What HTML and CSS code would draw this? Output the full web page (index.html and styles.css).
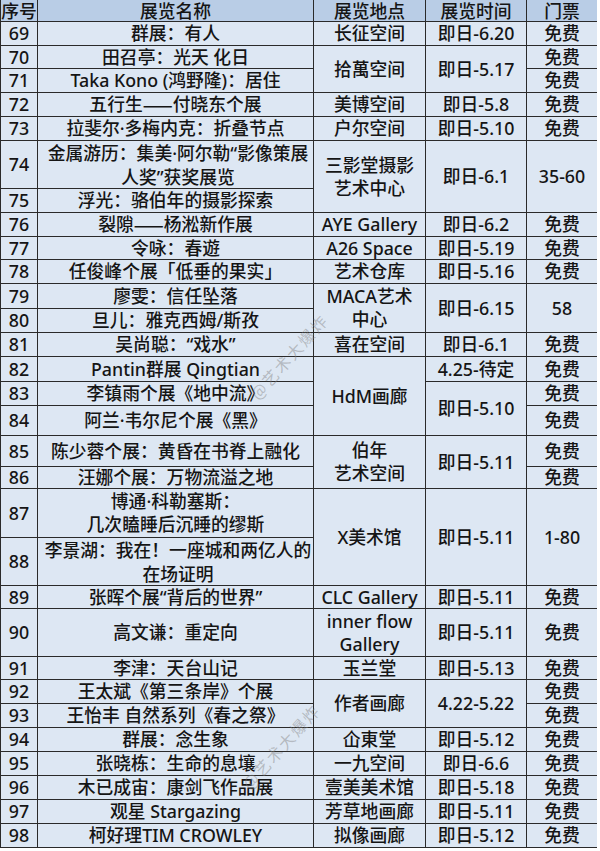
FILE: index.html
```html
<!DOCTYPE html>
<html lang="zh-CN">
<head>
<meta charset="utf-8">
<title>展览列表</title>
<link rel="stylesheet" href="styles.css">
</head>
<body>
<div class="sheet">
  <div class="c hd">序号</div><div class="c hd">展览名称</div><div class="c hd">展览地点</div><div class="c hd">展览时间</div><div class="c hd">门票</div>

  <div class="c">69</div><div class="c">群展：有人</div><div class="c">长征空间</div><div class="c">即日-6.20</div><div class="c">免费</div>

  <div class="c">70</div><div class="c">田召亭：光天 化日</div><div class="c s2">拾萬空间</div><div class="c s2">即日-5.17</div><div class="c">免费</div>
  <div class="c">71</div><div class="c">Taka Kono (鸿野隆)：居住</div><div class="c">免费</div>

  <div class="c">72</div><div class="c">五行生<span class="cjk">——</span>付晓东个展</div><div class="c">美博空间</div><div class="c">即日-5.8</div><div class="c">免费</div>
  <div class="c">73</div><div class="c">拉斐尔·多梅内克：折叠节点</div><div class="c">户尔空间</div><div class="c">即日-5.10</div><div class="c">免费</div>

  <div class="c">74</div><div class="c ovf"><div>金属游历：集美·阿尔勒“影像策展<br>人奖”获奖展览</div></div><div class="c s2">三影堂摄影<br>艺术中心</div><div class="c s2">即日-6.1</div><div class="c s2">35-60</div>
  <div class="c">75</div><div class="c">浮光：骆伯年的摄影探索</div>

  <div class="c">76</div><div class="c">裂隙<span class="cjk">——</span>杨淞新作展</div><div class="c">AYE Gallery</div><div class="c">即日-6.2</div><div class="c">免费</div>
  <div class="c">77</div><div class="c">令咏：春遊</div><div class="c">A26 Space</div><div class="c">即日-5.19</div><div class="c">免费</div>
  <div class="c">78</div><div class="c">任俊峰个展「低垂的果实」</div><div class="c">艺术仓库</div><div class="c">即日-5.16</div><div class="c">免费</div>

  <div class="c">79</div><div class="c">廖雯：信任坠落</div><div class="c s2">MACA艺术<br>中心</div><div class="c s2">即日-6.15</div><div class="c s2">58</div>
  <div class="c">80</div><div class="c">旦儿：雅克西姆/斯孜</div>

  <div class="c">81</div><div class="c">吴尚聪：“戏水”</div><div class="c">喜在空间</div><div class="c">即日-6.1</div><div class="c">免费</div>

  <div class="c">82</div><div class="c">Pantin群展 Qingtian</div><div class="c s3">HdM画廊</div><div class="c">4.25-待定</div><div class="c">免费</div>
  <div class="c">83</div><div class="c">李镇雨个展《地中流》</div><div class="c s2">即日-5.10</div><div class="c">免费</div>
  <div class="c">84</div><div class="c">阿兰·韦尔尼个展《黑》</div><div class="c">免费</div>

  <div class="c">85</div><div class="c">陈少蓉个展：黄昏在书脊上融化</div><div class="c s2">伯年<br>艺术空间</div><div class="c s2">即日-5.11</div><div class="c">免费</div>
  <div class="c">86</div><div class="c">汪娜个展：万物流溢之地</div><div class="c">免费</div>

  <div class="c">87</div><div class="c">博通·科勒塞斯：<br>几次瞌睡后沉睡的缪斯</div><div class="c s2">X美术馆</div><div class="c s2">即日-5.11</div><div class="c s2">1-80</div>
  <div class="c">88</div><div class="c ovf"><div>李景湖：我在！一座城和两亿人的<br>在场证明</div></div>

  <div class="c">89</div><div class="c">张晖个展“背后的世界”</div><div class="c">CLC Gallery</div><div class="c">即日-5.11</div><div class="c">免费</div>
  <div class="c">90</div><div class="c">高文谦：重定向</div><div class="c">inner flow<br>Gallery</div><div class="c">即日-5.11</div><div class="c">免费</div>
  <div class="c">91</div><div class="c">李津：天台山记</div><div class="c">玉兰堂</div><div class="c">即日-5.13</div><div class="c">免费</div>

  <div class="c">92</div><div class="c">王太斌《第三条岸》个展</div><div class="c s2">作者画廊</div><div class="c s2">4.22-5.22</div><div class="c">免费</div>
  <div class="c">93</div><div class="c">王怡丰 自然系列《春之祭》</div><div class="c">免费</div>

  <div class="c">94</div><div class="c">群展：念生象</div><div class="c">仚東堂</div><div class="c">即日-5.12</div><div class="c">免费</div>
  <div class="c">95</div><div class="c">张晓栋：生命的息壤</div><div class="c">一九空间</div><div class="c">即日-6.6</div><div class="c">免费</div>
  <div class="c">96</div><div class="c">木已成宙：康剑飞作品展</div><div class="c">壹美美术馆</div><div class="c">即日-5.18</div><div class="c">免费</div>
  <div class="c">97</div><div class="c">观星 Stargazing</div><div class="c">芳草地画廊</div><div class="c">即日-5.11</div><div class="c">免费</div>
  <div class="c">98</div><div class="c">柯好理TIM CROWLEY</div><div class="c">拟像画廊</div><div class="c">即日-5.12</div><div class="c">免费</div>

  <div class="wm wm1">@艺术大爆炸</div>
  <div class="wm wm2">@艺术大爆炸</div>
</div>
</body>
</html>
```

FILE: styles.css
```css
html, body {
  margin: 0;
  padding: 0;
  background: #ffffff;
}

body {
  font-family: "Noto Sans", "Noto Sans CJK SC", sans-serif;
  font-size: 17.8px;
  font-weight: 500;
  color: #151515;
}

.cjk {
  font-family: "Noto Sans CJK SC", sans-serif;
}

.sheet {
  position: relative;
  display: grid;
  width: 597px;
  grid-template-columns: 37px 276px 112px 101px 71px;
  grid-template-rows: 22px 24px 23px 24px 24px 24px 48px 24px 24px 23px 24px 25px 24px 24px 25px 24px 30px 31px 22px 49px 48px 23px 48px 23px 24px 24px 24px 24px 24px 24px 24px;
  background: #dde7f3;
  border-left: 1px solid #2a2a2a;
  box-sizing: border-box;
  overflow: hidden;
}

.c {
  display: flex;
  align-items: center;
  justify-content: center;
  text-align: center;
  line-height: 23px;
  border-right: 1px solid #2a2a2a;
  border-bottom: 1px solid #2a2a2a;
  white-space: nowrap;
  min-width: 0;
}

.hd {
  background: #b9cde6;
  line-height: 20px;
}

.s2 { grid-row: span 2; }
.s3 { grid-row: span 3; }

.ovf {
  display: block;
  padding: 0 0 0 5px;
  overflow: hidden;
}

.ovf > div {
  display: flex;
  flex-direction: column;
  justify-content: center;
  height: 100%;
  text-align: center;
  line-height: 24px;
}

.wm {
  position: absolute;
  font-family: "Noto Sans CJK SC", sans-serif;
  font-size: 16px;
  font-weight: 400;
  color: rgba(130, 130, 130, 0.45);
  transform: rotate(-48deg);
  transform-origin: left center;
  white-space: nowrap;
  letter-spacing: 2px;
  pointer-events: none;
}

.wm1 { left: 252px; top: 384px; }
.wm2 { left: 244px; top: 774px; }
```
